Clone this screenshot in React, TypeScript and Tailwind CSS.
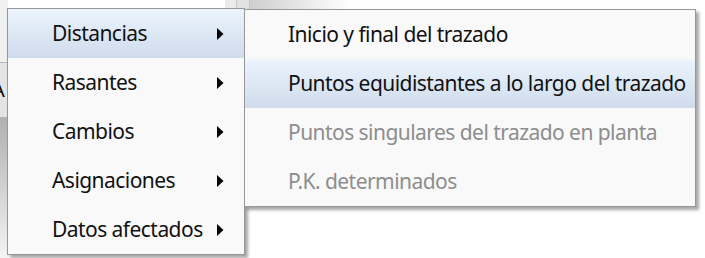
import React from "react";

type Item = { label: string; sub?: boolean; active?: boolean; disabled?: boolean };

const mainItems: Item[] = [
  { label: "Distancias", sub: true, active: true },
  { label: "Rasantes", sub: true },
  { label: "Cambios", sub: true },
  { label: "Asignaciones", sub: true },
  { label: "Datos afectados", sub: true },
];

const subItems: Item[] = [
  { label: "Inicio y final del trazado" },
  { label: "Puntos equidistantes a lo largo del trazado", active: true },
  { label: "Puntos singulares del trazado en planta", disabled: true },
  { label: "P.K. determinados", disabled: true },
];

function Arrow() {
  return (
    <svg width="7" height="12" viewBox="0 0 7 12" className="shrink-0">
      <path d="M0 0 L6.5 6 L0 12 Z" fill="#000" />
    </svg>
  );
}

function Row({ item, pad }: { item: Item; pad: string }) {
  return (
    <div
      className={`h-[49px] flex items-center ${pad} ${
        item.active ? "bg-gradient-to-b from-[#ecf4fd] to-[#cfdcec]" : ""
      }`}
    >
      <span
        className={`flex-1 whitespace-nowrap ${item.disabled ? "text-[#8d8d8d]" : "text-[#111]"}`}
      >
        {item.label}
      </span>
      {item.sub && (
        <span className="w-[27px] flex justify-start">
          <Arrow />
        </span>
      )}
    </div>
  );
}

export default function App() {
  return (
    <div className="relative w-[705px] h-[258px] overflow-hidden bg-white font-['Noto_Sans',sans-serif] text-[21px] tracking-[-0.55px]">
      {/* window behind the menus */}
      <div className="absolute left-0 top-0 w-[8px] h-[62px] bg-[#f0f0f0]" />
      <div className="absolute left-0 top-[62px] w-[8px] h-[56px] bg-[#e4e4e4] border-y border-[#b4b4b4] overflow-hidden">
        <span className="absolute left-[-8px] top-[12px] text-[20px] text-black">A</span>
      </div>
      <div className="absolute left-0 top-[118px] w-[8px] h-[140px] bg-gradient-to-b from-[#b0b0b0] to-[#f4f4f4]" />
      <div className="absolute left-[225px] top-0 w-[12px] h-[9px] bg-[#ebebeb] border-r border-[#c8c8c8]" />
      <div className="absolute left-[237px] top-0 w-[13px] h-[9px] bg-[#e2e2e2] border-r border-[#c8c8c8]" />
      <div className="absolute left-[250px] top-0 w-[100px] h-[9px] bg-gradient-to-r from-[#cfcfcf] to-white" />

      {/* main menu */}
      <div className="absolute left-[7px] top-[8px] w-[238px] border border-[#979797] bg-[#f9f9f9] shadow-[3px_3px_3px_rgba(0,0,0,0.35)]">
        {mainItems.map((it) => (
          <Row key={it.label} item={it} pad="pl-[44px] pr-0" />
        ))}
      </div>

      {/* submenu */}
      <div className="absolute left-[244px] top-[9px] w-[452px] border border-[#979797] bg-[#f9f9f9] shadow-[3px_3px_3px_rgba(0,0,0,0.35)]">
        {subItems.map((it) => (
          <Row key={it.label} item={it} pad="pl-[43px]" />
        ))}
      </div>
    </div>
  );
}
